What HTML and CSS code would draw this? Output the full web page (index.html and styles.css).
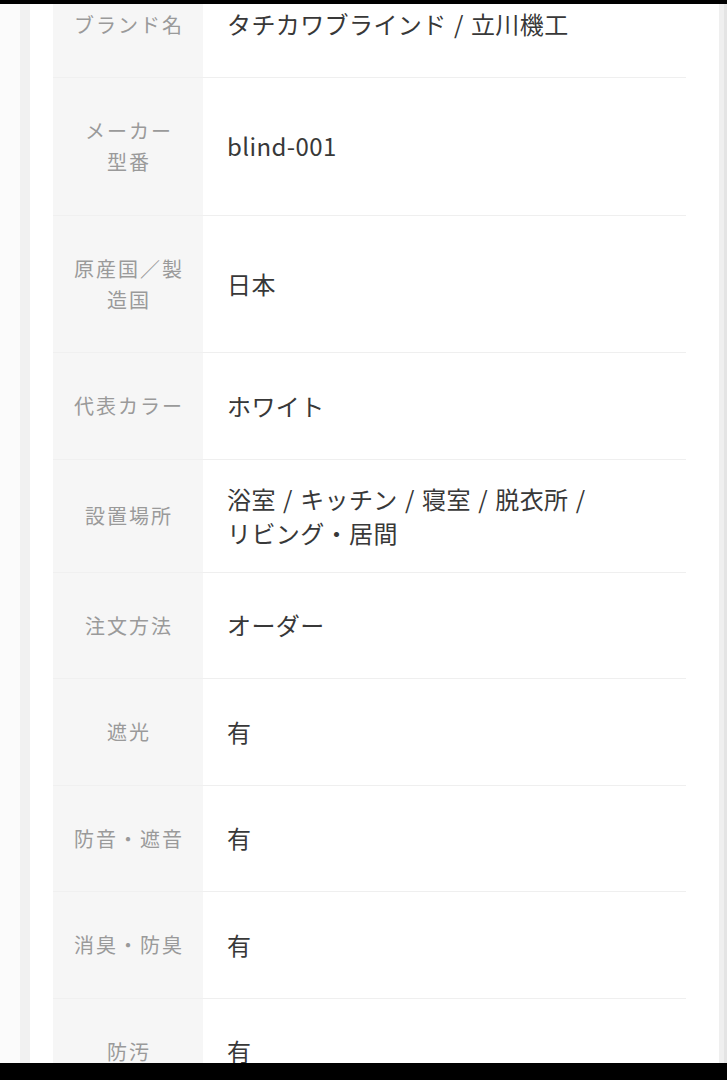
FILE: index.html
```html
<!DOCTYPE html>
<html lang="ja">
<head>
<meta charset="utf-8">
<title>商品仕様</title>
<link rel="stylesheet" href="styles.css">
</head>
<body>
<div class="screen">
  <div class="bezel bezel-top"></div>
  <div class="viewport">
    <div class="card">
      <table class="spec">
        <tbody>
          <tr><th>ブランド名</th><td>タチカワブラインド / 立川機工</td></tr>
          <tr><th>メーカー<br>型番</th><td>blind-001</td></tr>
          <tr><th>原産国／製造国</th><td>日本</td></tr>
          <tr><th>代表カラー</th><td>ホワイト</td></tr>
          <tr><th>設置場所</th><td>浴室 / キッチン / 寝室 / 脱衣所 /<br>リビング・居間</td></tr>
          <tr><th>注文方法</th><td>オーダー</td></tr>
          <tr><th>遮光</th><td>有</td></tr>
          <tr><th>防音・遮音</th><td>有</td></tr>
          <tr><th>消臭・防臭</th><td>有</td></tr>
          <tr><th>防汚</th><td>有</td></tr>
        </tbody>
      </table>
    </div>
  </div>
  <div class="bezel bezel-bottom"></div>
</div>
</body>
</html>
```

FILE: styles.css
```css
html, body {
  margin: 0;
  padding: 0;
  background: #000;
}

.screen {
  width: 727px;
  height: 1080px;
  display: flex;
  flex-direction: column;
  font-family: "Noto Sans CJK JP", "Noto Sans", sans-serif;
}

.bezel {
  background: #000;
  flex: none;
}

.bezel-top {
  height: 4px;
}

.bezel-bottom {
  height: 17px;
}

.viewport {
  flex: 1;
  overflow: hidden;
  background: #fbfbfb;
  padding-left: 20px;
  border-right: 3px solid #e4e4e4;
  display: flex;
}

.card {
  width: 675px;
  background: #fff;
  border-left: 10px solid #f1f1f1;
  border-right: 5px solid #efefef;
  padding-left: 23px;
}

.spec {
  width: 633px;
  margin-top: -32.5px;
  border-collapse: collapse;
  table-layout: fixed;
}

.spec th {
  width: 150px;
  box-sizing: border-box;
  background: #f6f6f6;
  color: #9a9a9a;
  font-weight: normal;
  font-size: 20px;
  letter-spacing: 2px;
  line-height: 31px;
  padding: 37.25px 14px 37.25px 16px;
  text-align: center;
  vertical-align: middle;
  border-bottom: 1px solid #f0f0f0;
}

.spec td {
  color: #383838;
  font-size: 24px;
  letter-spacing: 0.4px;
  word-spacing: 1.5px;
  line-height: 34px;
  padding: 22px 10px 22px 24px;
  text-align: left;
  vertical-align: middle;
  border-bottom: 1px solid #efefef;
}
```
